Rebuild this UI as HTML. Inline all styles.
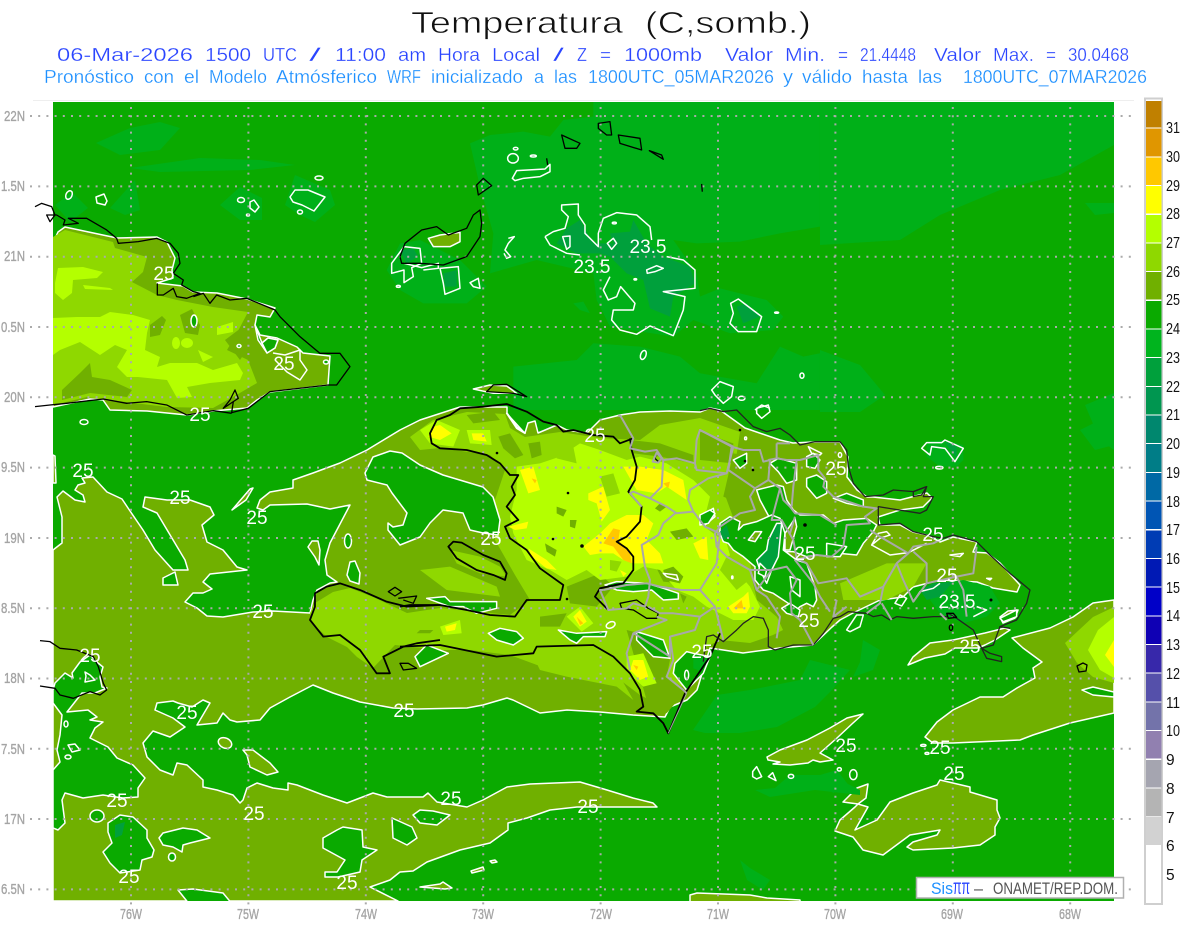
<!DOCTYPE html>
<html><head><meta charset="utf-8"><title>Temperatura</title>
<style>
html,body{margin:0;padding:0;background:#fff;width:1200px;height:927px;overflow:hidden}
svg{display:block;font-family:"Liberation Sans",sans-serif}
.o{fill:#70b000}.a{fill:#8fd800}.b{fill:#b4ff00}.y{fill:#ffff00}.r{fill:#ffc800}
.g{fill:#0aaa00}.l{fill:#00b018}.d{fill:#00a03c}
.w{stroke:#fff;stroke-width:1.5;stroke-linejoin:round;vector-effect:non-scaling-stroke}
.wl{fill:none;stroke:#fff;stroke-width:1.5;stroke-linejoin:round;vector-effect:non-scaling-stroke}
.k{fill:none;stroke:#000;stroke-width:1.3;stroke-linejoin:round;vector-effect:non-scaling-stroke}
.p{fill:none;stroke:#a8a8a8;stroke-width:2;stroke-linejoin:round;vector-effect:non-scaling-stroke}
.t1 text{fill:#111;stroke:#fff;stroke-width:.7}
.t2 text{fill:#2a45ff;font-size:18px;stroke:#fff;stroke-width:.25}
.t3 text{fill:#1e90ff;font-size:18px;stroke:#fff;stroke-width:.25}
.ax text{fill:#a4a4a4;font-size:15px;stroke:#a4a4a4;stroke-width:.35}
.lg text{fill:#111;font-size:15.5px}
.c text{fill:#fff;font-size:19px;text-anchor:middle}
</style></head><body>
<svg width="1200" height="927" viewBox="0 0 1200 927" xmlns="http://www.w3.org/2000/svg">
<defs><clipPath id="m"><rect x="53" y="102" width="1061" height="799"/></clipPath></defs>

<g class="t1" font-size="31">
<text x="411" y="33" textLength="212" lengthAdjust="spacingAndGlyphs">Temperatura</text>
<text x="645" y="33" textLength="166" lengthAdjust="spacingAndGlyphs">(C,somb.)</text>
</g>
<g class="t2">
<text x="57" y="61" textLength="136" lengthAdjust="spacingAndGlyphs">06-Mar-2026</text>
<text x="205" y="61" textLength="46" lengthAdjust="spacingAndGlyphs">1500</text>
<text x="263" y="61" textLength="34" lengthAdjust="spacingAndGlyphs">UTC</text>
<text x="309" y="61" textLength="12" lengthAdjust="spacingAndGlyphs">/</text>
<text x="335" y="61" textLength="51" lengthAdjust="spacingAndGlyphs">11:00</text>
<text x="398" y="61" textLength="28" lengthAdjust="spacingAndGlyphs">am</text>
<text x="438" y="61" textLength="42" lengthAdjust="spacingAndGlyphs">Hora</text>
<text x="492" y="61" textLength="48" lengthAdjust="spacingAndGlyphs">Local</text>
<text x="553" y="61" textLength="11" lengthAdjust="spacingAndGlyphs">/</text>
<text x="577" y="61" textLength="10" lengthAdjust="spacingAndGlyphs">Z</text>
<text x="600" y="61" textLength="11" lengthAdjust="spacingAndGlyphs">=</text>
<text x="624" y="61" textLength="78" lengthAdjust="spacingAndGlyphs">1000mb</text>
<text x="725" y="61" textLength="48" lengthAdjust="spacingAndGlyphs">Valor</text>
<text x="785" y="61" textLength="40" lengthAdjust="spacingAndGlyphs">Min.</text>
<text x="838" y="61" textLength="10" lengthAdjust="spacingAndGlyphs">=</text>
<text x="860" y="61" textLength="56" lengthAdjust="spacingAndGlyphs">21.4448</text>
<text x="934" y="61" textLength="47" lengthAdjust="spacingAndGlyphs">Valor</text>
<text x="993" y="61" textLength="41" lengthAdjust="spacingAndGlyphs">Max.</text>
<text x="1046" y="61" textLength="10" lengthAdjust="spacingAndGlyphs">=</text>
<text x="1068" y="61" textLength="61" lengthAdjust="spacingAndGlyphs">30.0468</text>
</g>
<g class="t3">
<text x="44" y="83" textLength="90" lengthAdjust="spacingAndGlyphs">Pronóstico</text>
<text x="144" y="83" textLength="30" lengthAdjust="spacingAndGlyphs">con</text>
<text x="184" y="83" textLength="15" lengthAdjust="spacingAndGlyphs">el</text>
<text x="209" y="83" textLength="58" lengthAdjust="spacingAndGlyphs">Modelo</text>
<text x="276" y="83" textLength="101" lengthAdjust="spacingAndGlyphs">Atmósferico</text>
<text x="387" y="83" textLength="34" lengthAdjust="spacingAndGlyphs">WRF</text>
<text x="431" y="83" textLength="92" lengthAdjust="spacingAndGlyphs">inicializado</text>
<text x="534" y="83" textLength="10" lengthAdjust="spacingAndGlyphs">a</text>
<text x="554" y="83" textLength="23" lengthAdjust="spacingAndGlyphs">las</text>
<text x="588" y="83" textLength="186" lengthAdjust="spacingAndGlyphs">1800UTC_05MAR2026</text>
<text x="783" y="83" textLength="10" lengthAdjust="spacingAndGlyphs">y</text>
<text x="802" y="83" textLength="50" lengthAdjust="spacingAndGlyphs">válido</text>
<text x="862" y="83" textLength="46" lengthAdjust="spacingAndGlyphs">hasta</text>
<text x="918" y="83" textLength="24" lengthAdjust="spacingAndGlyphs">las</text>
<text x="963" y="83" textLength="184" lengthAdjust="spacingAndGlyphs">1800UTC_07MAR2026</text>
</g>

<line x1="33" y1="100.5" x2="1134" y2="100.5" stroke="#eee"/>

<g clip-path="url(#m)">
<rect x="53" y="102" width="1061" height="799" class="g"/>

<!-- level 23 patches -->
<g class="l">
<g transform="translate(380,100) scale(.3333)">
<polygon points="270,130 330,105 430,95 510,110 550,60 640,50 640,5 1320,5 1320,380 1200,400 1080,425 950,430 880,420 950,520 960,590 1020,565 1160,600 1210,650 1180,690 1050,700 940,660 880,710 690,680 650,600 640,520 470,480 400,500 330,520 340,400 300,260"/>
<polygon points="60,430 120,420 240,480 320,560 260,610 130,610 60,570 20,510"/>
<polygon points="400,800 590,780 640,730 780,740 900,770 960,820 1130,850 1200,740 1270,770 1320,760 1320,930 400,930"/>
<polygon points="580,610 610,605 630,640 600,630"/>
</g>
<polygon points="820,102 1114,102 1114,145 1060,175 1000,190 940,215 900,240 820,245"/>
<polygon points="820,350 860,365 885,395 860,412 820,412"/>
<polygon points="1085,405 1114,393 1114,450 1100,440"/>
<polygon points="1085,203 1114,203 1114,213 1095,215"/>
<polygon points="693,730 717,695 750,690 800,680 810,660 850,670 832,690 815,707 777,727 740,733 705,733"/>
<polygon points="863,640 880,650 873,670 853,677 860,662"/>
<polygon points="740,860 750,868 770,880 763,890 747,880"/>
<polygon points="820,775 837,770 850,787 833,793"/>
<polygon points="96,143 130,128 160,122 180,128 160,150 120,155"/>
<polygon points="130,168 200,158 260,160 295,165 250,170 160,172"/>
<polygon points="55,205 72,192 88,208 70,222"/>
<polygon points="110,208 135,180 140,210 125,215"/>
<polygon points="220,205 240,187 262,198 262,220 240,220"/>
<polygon points="285,205 295,175 330,190 335,205 315,222 300,215"/>
<polygon points="1080,430 1110,415 1114,445 1095,450"/>
</g>
<g class="d" transform="translate(380,100) scale(.3333)">
<polygon points="560,385 600,360 640,430 700,430 690,400 750,395 760,360 800,430 850,470 930,500 945,550 880,590 870,650 810,625 790,540 740,520 690,470 660,460 590,460 530,430"/>
<polygon points="60,450 100,445 115,470 80,490"/>
<polygon points="190,520 230,510 230,560 195,560"/>
<polygon points="1070,620 1100,610 1140,650 1090,670"/>
</g>

<!-- main olive region -->
<polygon class="o w" points="53,901 53,550 62,543 62,517 57,497 63,491 75,500 85,502 83,495 75,490 78,485 85,483 82,478 93,477 107,492 122,499 128,508 143,530 155,550 173,570 188,570 185,560 157,513 143,507 145,497 167,500 190,500 210,507 214,515 202,525 207,542 223,550 237,567 247,570 210,574 203,582 212,589 203,593 193,593 185,602 197,608 207,616 223,617 253,612 273,611 310,613 313,600 317,590 330,583 337,582 327,575 325,560 330,543 350,505 330,509 307,504 270,505 263,510 257,508 260,500 270,492 293,488 293,480 313,473 340,463 367,450 400,430 420,420 460,407 507,407 507,413 517,427 525,433 528,423 535,421 538,433 557,425 567,430 587,433 600,420 620,415 640,412 670,411 700,412 710,408 720,410 745,428 780,440 793,443 813,442 840,442 848,457 847,477 857,490 867,497 873,497 900,500 927,493 932,498 923,507 900,510 878,517 880,525 900,525 913,532 927,535 940,542 953,537 977,542 973,552 987,553 1000,563 1020,585 1017,592 993,588 977,582 940,580 913,587 903,597 880,600 853,613 840,620 832,627 813,645 780,648 743,653 710,648 697,690 687,700 670,707 665,717 633,715 600,712 567,710 540,713 513,700 507,698 483,705 467,708 417,709 393,708 360,702 333,693 313,685 290,697 270,708 260,720 237,722 230,720 223,713 217,723 197,725 210,703 203,700 192,707 178,703 173,701 157,703 155,710 173,718 185,727 170,737 153,731 143,743 147,757 160,770 173,775 177,763 187,765 203,780 203,787 217,790 233,795 240,803 243,800 247,788 257,783 273,788 288,790 288,783 297,785 323,795 347,803 373,793 387,797 423,797 428,793 437,802 467,807 483,800 507,787 530,784 580,782 607,790 633,798 653,803 657,807 603,807 577,807 550,810 527,818 508,823 508,830 490,843 460,850 427,862 413,871 400,872 390,880 370,887 398,901"/>

<!-- olive pieces in sea -->
<polygon class="o w" points="53,455 55,456 56,483 53,483"/>
<polygon class="o w" points="1114,600 1093,603 1073,617 1050,628 1012,638 1023,648 1042,662 1033,668 1035,678 1017,688 1003,697 980,697 953,710 937,722 925,737 933,743 953,743 1020,740 1033,735 1070,723 1114,713"/>
<polygon class="a" points="1114,607 1093,617 1065,643 1077,663 1093,677 1114,683"/>
<polygon class="b" points="1114,617 1098,630 1088,650 1100,670 1114,678"/>
<polygon class="y" points="1114,640 1105,655 1114,667"/>
<polygon class="o w" points="908,665 913,657 930,643 953,640 985,633 1005,628 1010,630 995,640 985,645 978,648 955,648 945,654 925,658"/>
<polygon class="o w" points="1000,617 1008,611 1018,610 1015,618 1003,623"/>
<polygon class="o w" points="767,757 780,750 807,740 830,728 847,718 863,714 853,723 837,738 820,753 833,760 820,762 813,760 808,763 790,765 773,764 780,762 768,760"/>
<polygon class="o w" points="940,780 970,787 970,792 997,800 997,810 1000,818 995,827 995,835 980,845 953,848 913,850 907,847 913,842 937,835 940,830 910,835 883,855 863,850 853,837 835,831 840,820 855,807 858,804 843,802 857,788 868,784 866,798 858,804 868,807 855,830 877,820 890,802 913,793 937,785"/>
<polygon class="o w" points="690,905 690,895 697,893 750,895 767,898 800,900 800,905"/>
<polygon class="o w" points="232,510 250,489 253,488 246,500"/>
<polygon class="o w" points="308,547 312,541 318,541 320,550 319,565 315,557"/>
<polygon class="o w" points="420,887 440,884 443,882 452,888 445,889"/>
<polygon class="o w" points="471,871 483,867 484,870 472,873"/>
<polygon class="o w" points="490,861 495,860 497,862 492,863"/>
<ellipse class="o w" cx="225" cy="743" rx="7" ry="5" transform="rotate(25 225 743)"/>
<polygon class="o w" points="243,750 253,750 270,763 278,772 267,775 250,767 247,755"/>

<!-- Cuba -->
<polygon class="o w" points="53,243 58,232 65,227 117,238 157,237 167,242 175,258 172,270 173,278 157,283 183,286 193,292 217,293 247,299 275,308 270,317 257,315 255,325 260,335 277,338 297,347 303,353 330,356 328,385 270,392 257,400 247,408 213,411 187,415 147,411 110,410 103,400 90,399 53,407"/>
<polygon class="a" points="53,237 65,230 113,242 115,248 147,257 143,272 132,282 157,295 177,300 213,307 248,312 237,333 227,350 248,360 257,383 233,397 213,408 167,407 110,400 87,397 53,405"/>
<g class="o">
<polygon points="62,390 80,373 90,363 92,377 110,380 132,390 127,397 90,393 62,400"/>
<polygon points="180,315 192,309 200,325 198,335 185,333"/>
<polygon points="150,325 162,316 166,320 160,335 150,337"/>
<polygon points="225,340 245,325 250,345 240,360"/>
</g>
<g class="b">
<polygon points="58,268 83,267 103,272 97,278 73,280 72,293 63,300 55,293 55,283"/>
<polygon points="83,285 110,288 113,290 85,289"/>
<polygon points="53,318 77,317 100,317 110,312 133,315 150,320 147,333 145,350 160,357 157,367 170,363 197,363 213,370 237,363 243,373 240,380 210,383 187,387 192,397 177,398 167,380 138,377 127,377 117,367 127,350 115,345 100,355 80,342 60,350 53,355"/>
<polygon points="217,327 233,322 233,332 217,335"/>
<polygon points="198,350 213,357 203,362"/>
<ellipse cx="187" cy="343" rx="6" ry="5"/>
<ellipse cx="176" cy="343" rx="4" ry="6"/>
</g>
<g class="g">
<polygon class="w" points="255,325 262,343 268,338 278,340 275,348 267,353 258,340"/>
<polygon class="w" points="262,343 268,338 278,340 275,348 267,353"/>
<ellipse class="w" cx="194" cy="321" rx="3" ry="6"/>
<ellipse class="w" cx="239" cy="346" rx="2" ry="1.5"/>
<ellipse class="w" cx="326" cy="362" rx="2.5" ry="2"/>
<ellipse class="w" cx="84" cy="422" rx="4" ry="2.5"/>
</g>
<polyline class="wl" points="273,353 285,355 300,350 300,360 307,370 300,380 287,372 275,360"/>

<!-- Hispaniola gradient -->
<polygon class="a" points="410,437 433,420 467,412 505,414 510,428 525,437 560,432 600,438 640,440 660,425 700,418 740,432 735,465 725,495 733,517 750,570 757,600 777,617 783,630 773,635 750,643 720,640 700,650 692,670 680,690 665,700 650,700 640,695 620,680 600,668 570,665 537,665 510,655 470,650 440,650 395,645 373,668 357,657 347,647 327,637 312,623 310,613 315,603 333,592 350,588 373,597 407,613 440,608 480,612 510,615 530,600 515,575 495,540 495,500 505,470 490,455 440,448 420,450"/>
<g transform="translate(700,400) scale(.3333)" class="a">
<polygon points="420,550 560,490 680,490 640,560 560,600 430,600"/>
</g>
<g transform="translate(400,400) scale(.3333)">
<g class="a">
<polygon points="150,450 240,470 300,500 320,530 240,520 170,490"/>
<polygon points="60,510 150,500 290,560 300,590 140,570"/>
<polygon points="410,790 600,780 660,830 700,900 650,860 500,830 420,810"/>
</g>
<g class="o">
<polygon points="295,110 330,100 370,165 345,175 310,145"/>
<polygon points="385,130 420,125 425,165 395,175"/>
<polygon points="200,45 280,35 300,60 220,70"/>
<polygon points="470,320 500,330 490,350 470,340"/>
<polygon points="510,360 530,360 525,385 510,380"/>
<polygon points="435,430 470,450 465,470 440,455"/>
<polygon points="480,485 500,485 495,500"/>
<polygon points="620,490 645,490 640,510 625,510"/>
<polygon points="765,325 780,310 800,320 780,335"/>
<polygon points="810,395 860,385 880,410 830,420"/>
<polygon points="770,505 820,500 850,530 840,550 790,545"/>
<polygon points="980,480 1040,470 1060,520 1020,560 980,530"/>
<polygon points="840,580 860,590 850,610"/>
<polygon points="900,95 1000,130 1000,190 900,180"/>
<polygon points="690,120 780,130 880,165 880,190 780,170 700,160"/>
<polygon points="1000,160 1130,180 1200,190 1200,380 1100,280 1060,280 1040,320 970,290"/>
<polygon points="680,690 720,700 810,780 800,830 860,870 800,940 740,900"/>
<polygon points="500,560 600,520 640,560 590,620 510,610"/>
<polygon points="60,690 100,690 90,700 50,700"/>
<polygon points="420,650 500,640 480,680 420,680"/>
</g>
<g class="b">
<polygon points="350,200 420,190 480,170 540,130 600,150 680,180 720,170 800,190 880,240 930,290 920,330 900,370 980,430 1000,500 1050,560 1080,620 1060,660 1000,660 920,620 880,590 830,570 780,510 730,500 680,530 600,540 560,510 500,540 450,510 380,480 340,400 330,350 350,270"/>
<polygon points="60,90 110,60 180,90 160,140 90,130"/>
<polygon points="200,90 270,90 275,135 210,130"/>
<polygon points="500,650 540,620 580,670 545,695"/>
<polygon points="120,680 180,660 185,700 130,705"/>
<polygon points="680,770 730,760 770,850 730,860 680,815"/>
<polygon points="130,770 400,650 450,660 300,700 200,700" opacity="0"/>
</g>
<g class="o">
<polygon points="470,320 500,330 490,350 470,340"/>
<polygon points="510,360 530,360 525,385 510,380"/>
<polygon points="435,430 470,450 465,470 440,455"/>
<polygon points="765,325 780,310 800,320 780,335"/>
<polygon points="810,395 860,385 880,410 830,420"/>
<polygon points="790,510 820,500 850,530 840,550 795,540"/>
</g>
<g class="a">
<polygon points="480,130 520,140 530,190 470,175"/>
<polygon points="630,480 665,485 650,515 630,510"/>
<polygon points="600,230 640,220 660,280 620,290"/>
<polygon points="980,470 1040,450 1060,530 1010,570 960,510"/>
</g>
<g class="y">
<polygon points="360,210 400,200 420,270 385,280"/>
<polygon points="565,280 610,260 630,330 605,365 590,310 565,300"/>
<polygon points="550,440 600,400 630,370 680,345 730,345 760,370 740,420 780,460 790,490 740,490 700,490 670,480 640,460 600,460 570,465"/>
<polygon points="670,200 720,200 790,210 850,240 860,300 800,260 770,280 710,270 690,235"/>
<polygon points="880,430 920,410 925,480 900,475"/>
<polygon points="985,620 1030,590 1045,575 1050,620 1040,640 1000,640"/>
<polygon points="385,445 440,480 470,510 440,505 395,470"/>
<polygon points="325,380 385,365 380,385 345,390"/>
<polygon points="100,80 120,75 155,100 120,120 85,110"/>
<polygon points="215,100 250,100 260,125 220,120"/>
<polygon points="520,650 540,630 560,665 540,680"/>
<polygon points="135,680 170,670 165,690 140,695"/>
<polygon points="700,780 730,780 745,830 720,840 690,810"/>
<polygon points="660,510 680,520 670,530"/>
</g>
<g class="r">
<polygon points="610,430 640,385 660,390 655,420 690,460 695,490 670,480 640,440"/>
<polygon points="790,250 810,245 805,265"/>
<polygon points="395,235 410,240 405,250"/>
<polygon points="1000,625 1025,600 1030,625"/>
<polygon points="530,650 550,670 540,675"/>
<polygon points="700,795 715,800 710,810"/>
</g>

<!-- green holes west / south of DR -->
<g class="g">
<polygon class="w" points="900,350 940,325 945,350 915,375"/>
<polygon class="w" points="615,555 650,545 740,550 790,565 835,580 835,597 790,600 755,570 700,575 650,570"/>
<polygon class="w" points="265,700 300,685 350,695 370,715 340,735 290,720"/>
<polygon class="w" points="475,690 530,700 620,695 615,710 550,710 530,730 510,720"/>
<polygon class="w" points="80,595 135,590 150,605 290,605 290,625 230,640 190,620 150,620"/>
<polygon class="w" points="45,770 80,735 145,760 60,800"/>
<polygon class="w" points="710,695 790,720 810,775 760,770 710,720"/>
<polygon class="w" points="825,790 860,755 880,760 930,770 910,820 860,870 820,820"/>
<polygon class="w" points="1000,180 1040,160 1040,190 1020,205"/>
</g>
<g class="l"><polygon points="880,770 925,775 905,815 880,805"/></g>
<g class="wl">
<polygon class="wl" points="790,520 830,525 835,540 800,530"/>
<ellipse class="wl" cx="632" cy="675" rx="14" ry="9" transform="rotate(-25 632 675)"/>
<ellipse class="wl" cx="1037" cy="115" rx="3" ry="4"/>
<ellipse class="wl" cx="997" cy="532" rx="2" ry="4"/>
<ellipse class="wl" cx="860" cy="825" rx="6" ry="14"/>
<polygon class="wl" points="320,40 350,85 375,100"/>
</g>
</g>

<!-- green holes in olive -->
<polygon class="g w" points="365,473 373,457 390,451 402,453 420,465 443,475 483,487 493,497 500,520 498,535 483,533 470,530 463,513 443,510 430,523 420,537 400,545 388,530 388,523 393,527 403,525 407,513 392,493 387,485 367,480"/>
<polygon class="g w" points="53,828 53,770 60,762 57,750 60,735 62,715 53,703 53,690 55,683 65,673 73,678 72,673 80,662 90,655 98,663 103,667 100,677 102,687 107,688 95,693 82,693 67,712 88,710 97,717 90,720 103,722 95,728 90,738 108,747 117,758 133,765 145,778 138,788 138,797 123,798 103,795 83,798 65,793 62,800 65,823 58,830"/>
<polygon class="g w" points="108,823 120,815 133,817 147,830 147,838 154,850 152,857 142,860 140,870 120,873 110,863 103,852 112,843 108,832"/>
<polygon class="g w" points="159,838 163,833 183,828 197,830 210,838 190,843 183,845 182,852 173,847 163,845"/>
<ellipse class="g w" cx="97" cy="816" rx="7" ry="6"/>
<ellipse class="g w" cx="172" cy="857" rx="3.5" ry="4"/>
<polygon class="g w" points="323,838 337,830 343,827 362,830 363,847 377,850 362,860 360,872 338,877 325,877 325,872 337,872 345,860 323,848"/>
<polygon class="g w" points="392,818 412,827 417,838 407,845 393,838"/>
<polygon class="g w" points="413,815 420,810 433,811 450,815 437,825 420,823"/>
<polygon class="g w" points="178,890 193,889 223,893 233,905 190,905"/>
<polygon class="g w" points="1082,690 1093,687 1114,692 1114,697 1093,695"/>
<ellipse class="g w" cx="348" cy="541" rx="3.5" ry="7"/>
<polygon class="g w" points="350,562 355,561 360,573 359,584 350,581 347,575"/>
<polygon class="g w" points="163,578 175,572 178,585 163,585"/>
<g class="wl">
<ellipse class="wl" cx="66" cy="724" rx="2" ry="3"/>
<ellipse class="wl" cx="68" cy="757" rx="3" ry="2"/>
<polygon class="wl" points="68,745 75,744 80,750 72,752"/>
<polygon class="wl" points="85,672 90,675 95,680 85,682 86,676"/>
</g>
<g fill="#00a03c"><polygon points="115,825 125,822 122,835 115,838"/></g>

<!-- DR central greens -->
<g transform="translate(700,400) scale(.3333)">
<polygon class="g w" points="170,270 230,255 250,260 260,300 280,330 300,345 370,345 400,370 430,360 500,355 530,375 520,395 490,430 470,465 420,460 390,470 350,465 320,470 280,455 255,455 250,400 230,365 215,365 180,300"/>
<polygon class="g w" points="60,370 90,350 120,365 115,390 130,375 170,365 215,345 240,355 255,400 250,450 290,480 320,490 345,560 350,600 340,620 320,610 300,620 280,640 265,610 250,600 220,580 190,570 165,540 165,500 130,470 100,450 85,430 70,425 60,400"/>
<polygon class="g w" points="210,190 235,175 290,190 290,240 260,250 235,215"/>
<polygon class="g w" points="320,235 350,225 380,245 380,280 350,295 320,260"/>
<polygon class="g w" points="320,170 340,160 360,180 345,205 320,200"/>
<polygon class="g w" points="400,295 440,280 490,300 490,320 440,310"/>
<polygon class="g w" points="440,690 470,645 490,645 480,680 450,695"/>
<polygon class="g w" points="245,625 270,610 300,630 295,650 260,640"/>
<polygon class="g w" points="0,345 30,330 45,340 25,370 0,375"/>
<polygon class="g w" points="380,430 440,440 420,470 380,470"/>
<polygon class="o w" points="255,400 285,355 290,380 270,450 255,450"/>
<polygon class="o w" points="145,420 165,395 185,395 165,425"/>
<polygon class="d" points="205,420 230,370 245,370 235,470 215,510 180,510 170,480 200,450"/>
<polygon class="d" points="60,395 80,375 90,410 70,420"/>
<polygon class="wl" points="205,420 230,370 245,370 235,470 215,510 200,550 180,510 170,480 200,450"/>
<polygon class="wl" points="270,530 300,540 300,590 275,570"/>
<polygon class="wl" points="515,435 535,400 560,395 570,405 540,415"/>
<polyline class="wl" points="515,435 570,465 625,458 680,430"/>
<polygon class="g w" points="180,490 200,510 195,530 175,520"/>
<polygon class="wl" points="325,140 365,160 360,165 335,160"/>
<ellipse class="wl" cx="420" cy="165" rx="5" ry="7"/>
<polygon class="wl" points="750,465 790,460 780,470"/>
<polygon class="wl" points="860,535 875,535 870,540"/>
<!-- SE green -->
<polygon class="l" points="720,550 790,540 870,560 900,610 860,650 790,670 720,640 690,600"/>
<polygon class="d" points="660,570 700,550 760,545 720,590 680,600"/>
<polyline class="wl" points="640,605 660,575 700,565 720,550"/>
<polyline class="wl" points="830,620 860,630 820,650"/>
<polygon class="wl" points="585,610 600,585 620,595 605,618"/>
<polygon class="g w" points="900,655 950,630 950,650 910,665"/>
<!-- small NE green outline -->
<polygon class="l" points="680,125 730,120 790,135 790,180 770,200 720,200 680,170"/>
<polygon class="d" points="735,125 770,140 770,175"/>
<polygon class="wl" points="665,145 680,128 725,128 735,120 790,145 765,185 735,145 695,140 690,165"/>
<ellipse class="wl" cx="718" cy="203" rx="11" ry="4"/>
<polygon class="wl" points="170,25 205,15 210,35 185,55 170,40"/>
</g>
<polygon class="l" points="755,790 775,788 790,775 830,775 860,790 860,795 815,790 770,797"/>
<g class="wl" transform="translate(740,580) scale(.3333)">
<polygon class="wl" points="38,575 50,560 65,590 50,597 38,590"/>
<polygon class="wl" points="85,590 98,578 108,602"/>
<ellipse class="wl" cx="153" cy="589" rx="8" ry="6"/>
<ellipse class="wl" cx="298" cy="568" rx="6" ry="5"/>
<ellipse class="wl" cx="340" cy="584" rx="11" ry="15"/>
<ellipse class="wl" cx="550" cy="496" rx="8" ry="3"/>
<ellipse class="wl" cx="561" cy="520" rx="6" ry="3"/>
</g>

<!-- Bahamas white contours -->
<g class="wl" transform="translate(380,100) scale(.3333)">
<ellipse class="wl" cx="399" cy="175" rx="16" ry="14"/>
<ellipse class="wl" cx="407" cy="146" rx="7" ry="4"/>
<ellipse class="wl" cx="460" cy="168" rx="9" ry="3"/>
<polygon class="wl" points="397,235 410,212 495,207 510,193 510,215 480,230 430,235 405,242"/>
<polygon class="wl" points="35,490 72,440 120,445 125,490 95,503 100,530 72,548 72,510 35,520"/>
<polyline class="wl" points="72,490 125,503 175,490 175,505 130,510"/>
<polygon class="wl" points="180,505 235,500 240,565 195,583 190,550"/>
<polygon class="wl" points="270,548 295,535 300,565 280,560"/>
<ellipse class="wl" cx="55" cy="559" rx="6" ry="3"/>
<polyline class="wl" points="385,415 403,410 385,430 375,450 392,470 380,475 372,460"/>
<polyline class="wl" points="495,410 520,395 555,385 565,350 545,330 545,315 595,312 595,345 615,375 615,400 655,440 655,400 670,355 710,338 770,345 810,380 815,420"/>
<polyline class="wl" points="495,410 510,435 560,460 600,465"/>
<polyline class="wl" points="690,530 670,570 685,600 710,590 722,560 765,610 760,630 700,630 695,660 720,690 770,703 810,678 880,707 910,630 915,590 850,575 945,565 945,510 910,480 860,470"/>
<polygon class="wl" points="548,410 570,408 570,440 560,448"/>
<polygon class="wl" points="682,430 700,415 710,430 695,448"/>
<ellipse class="wl" cx="703" cy="369" rx="6" ry="2.5"/>
<polygon class="wl" points="800,510 830,497 850,505 825,515 802,520"/>
<ellipse class="wl" cx="766" cy="538" rx="4" ry="2"/>
<polygon class="wl" points="1052,610 1075,597 1145,650 1130,695 1075,695 1050,670 1060,640"/>
<ellipse class="wl" cx="1190" cy="638" rx="6" ry="2"/>
<ellipse class="wl" cx="790" cy="765" rx="8" ry="14" transform="rotate(20 790 765)"/>
<ellipse class="wl" cx="1266" cy="827" rx="6" ry="8"/>
<polygon class="wl" points="995,870 1020,845 1060,860 1055,890 1030,910 1005,885"/>
<ellipse class="wl" cx="1085" cy="895" rx="10" ry="6"/>
<polyline class="wl" points="1125,930 1145,915 1170,925"/>
<polygon class="o w" points="280,867 330,855 380,858 410,880 340,880"/>
<polygon class="o w" points="145,415 180,405 240,397 240,425 210,440 160,440"/>
</g>
<g class="wl">
<ellipse class="wl" cx="69" cy="195" rx="3" ry="4.5" transform="rotate(25 69 195)"/>
<polygon class="wl" points="96,197 104,194 107,201 105,205 97,203"/>
<ellipse class="wl" cx="241" cy="200" rx="3.5" ry="2.5"/>
<polygon class="wl" points="250,202 254,200 259,207 255,212 250,208"/>
<ellipse class="wl" cx="248" cy="215" rx="1.5" ry="1"/>
<ellipse class="wl" cx="319" cy="178" rx="4" ry="2"/>
<polygon class="wl" points="290,197 295,190 308,190 325,197 314,211 302,205 293,202"/>
<ellipse class="wl" cx="300" cy="212" rx="2.5" ry="2"/>
</g>
</g>

<!-- grid -->
<g stroke="#aaa" stroke-width="2" stroke-dasharray="2 6.2" fill="none">
<path d="M30 116H1133M30 186.4H1133M30 256.7H1133M30 327H1133M30 397.3H1133M30 467.6H1133M30 538H1133M30 608.2H1133M30 678.5H1133M30 748.8H1133M30 819H1133M30 889.4H1133"/>
<path d="M131 107V905M248.4 107V905M365.8 107V905M483.2 107V905M600.6 107V905M718 107V905M835.4 107V905M952.8 107V905M1070.2 107V905"/>
</g>

<!-- Coastlines -->
<g>
<g transform="translate(400,400) scale(.3333)">
<polyline class="k" style="stroke-width:1.8" points="700,115 660,130 640,110 580,105 520,90 490,95 470,75 430,65 380,35 320,12 250,20 180,25 150,45 110,60 90,100 95,130 120,145 200,150 260,165 300,190 330,225 355,225 335,260 345,285 320,320 355,360 315,380 330,415 380,450 420,505 490,555 480,600 380,600 345,650 270,645 200,630 120,615 30,615 0,620"/>
<polyline class="k" style="stroke-width:1.8" points="0,740 120,735 290,770 400,760 410,740 580,735 640,770 690,820 720,870 730,920 710,935 760,940 790,970 805,1000 855,880 930,770 960,700"/>
<polygon class="k" style="stroke-width:1.8" points="145,440 160,425 185,428 250,465 300,485 320,520 315,540 280,525 230,510 170,475"/>
<polyline class="k" style="stroke-width:1.8" points="690,115 695,150 710,200 705,240 685,275 725,320 720,365 680,410 650,425 680,445 700,470 700,510 670,550 600,565 585,590 625,630"/>
<polygon class="k" points="660,610 710,600 745,625 775,640 770,655 740,655 700,630 665,625"/>
<polygon class="k" points="770,160 785,175 775,185 765,175"/>
</g>
<g transform="translate(40,450) scale(.3333)">
<polyline class="k" style="stroke-width:1.8" points="1200,465 1100,470 1040,455 960,420 900,400 860,410 825,430 825,470 810,510 850,560 900,555 960,600 1010,670 1050,670 1030,620 1090,590 1130,580 1200,570"/>
<polygon class="k" points="1045,425 1065,412 1085,425 1065,438"/>
<polygon class="k" points="1080,640 1105,640 1130,655 1090,660"/>
<polyline class="k" points="1075,445 1130,438 1120,460 1090,450"/>
<polyline class="k" points="0,572 30,575 60,595 110,600 160,620 175,650 190,700 200,720 180,735 150,725 100,745 60,735 45,715 0,708"/>
</g>
<polygon class="k" transform="translate(1077,665)" points="0,1 6,-2 10,0 9,6 2,7"/>
<g transform="translate(700,400) scale(.3333)">
<polyline class="k" style="stroke:#222" points="0,32 30,25 70,35 110,30 130,50 160,80 200,95 240,85 270,105 300,135 345,125 420,125 440,150 445,200 460,250 495,290 550,285 580,270 640,275 680,260 670,290 700,290 680,330 660,340 535,320 535,375 600,370 640,395 700,410 730,415 760,405 830,425 870,465 930,520 990,570 980,610 950,660 900,680 880,735 845,745 820,690 770,655 745,640 740,650 700,650 640,655 590,650 570,660 545,645 520,650 500,640 445,635 420,650 400,655 370,700 340,735 280,735 225,750 205,740 205,690 190,655 160,650 130,670 110,690 70,725 40,705 20,710 15,745 10,785"/>
<polyline class="k" style="stroke:#222" points="845,745 860,775 905,785 905,770 870,760 845,745"/>
<polyline class="k" style="stroke:#222" points="900,680 930,685"/>
<polygon class="k" style="stroke:#222" points="640,275 680,260 665,285 640,290"/>
</g>
<g transform="translate(740,580) scale(.3333)">
<polygon class="k" points="620,100 640,100 650,112 625,115"/>
<ellipse class="k" cx="633" cy="143" rx="5" ry="8"/>
</g>
<g transform="translate(0,200) scale(.3333)">
<polyline class="k" points="105,20 125,10 155,20 165,45 150,65 140,45 170,45 195,60 190,75 235,70 205,55 260,55 320,90 350,115 355,130 415,125 470,115 510,130 535,160 540,190 520,220 550,240 545,255 580,275 600,280 560,295 530,290 520,265 490,285 472,285 472,250"/>
<polyline class="k" points="580,290 610,280 630,310 650,285 690,300 740,295 825,330 840,350 900,410 960,460 1020,460 1050,500 1010,555 985,555 810,575 745,625 695,638 700,605 715,595 705,570 690,600 670,625 700,605"/>
<polyline class="k" points="695,640 640,632 560,645 500,615 440,605 380,610 310,597 200,610 150,615 105,620"/>
</g>
<g transform="translate(380,100) scale(.3333)">
<polygon class="k" points="60,470 75,430 125,390 170,380 205,405 260,385 280,345 300,330 305,370 300,410 260,470 190,495 120,490 65,490"/>
<polygon class="k" points="290,255 310,235 335,257 295,285"/>
<polygon class="k" points="545,105 600,130 590,145 555,145"/>
<polygon class="k" points="655,70 690,65 695,105 680,105 655,85"/>
<polygon class="k" points="715,105 780,115 785,150 720,130"/>
<polygon class="k" points="808,152 845,165 850,178"/>
<polyline class="k" points="500,175 503,195"/>
<polyline class="k" points="965,252 967,275"/>
<polygon class="k" points="320,875 340,855 380,853 440,890 400,880"/>
</g>
<g fill="#000">
<circle cx="497" cy="453" r="1.3"/><circle cx="568" cy="493" r="1.3"/><circle cx="582" cy="546" r="1.8"/><circle cx="553" cy="539" r="1.3"/><circle cx="567" cy="599" r="1.3"/><circle cx="740" cy="430" r="1.3"/><circle cx="745" cy="461" r="1.3"/><circle cx="753" cy="470" r="1.3"/><circle cx="805" cy="525" r="1.8"/><circle cx="991" cy="600" r="1.5"/>
</g>
</g>

<!-- Provincial lines -->
<g transform="translate(400,400) scale(.3333)">
<polyline class="p" points="660,45 680,80 700,115 690,145 735,155 770,150 790,180 830,175 885,190 890,120 900,90 940,110 1000,140"/>
<polyline class="p" points="790,180 785,260 750,295 700,275 690,280 725,320"/>
<polyline class="p" points="885,190 890,210 980,220 1000,140"/>
<polyline class="p" points="980,220 925,235 870,270 865,300 880,335 825,340 790,370 775,405 725,435 735,500 750,540 745,590 735,620"/>
<polyline class="p" points="750,295 800,320 830,340"/>
<polyline class="p" points="880,335 915,380 960,400 950,490 900,570 845,570 780,560 740,550 680,555 610,570"/>
<polyline class="p" points="900,570 945,620 900,650 820,640 780,640 745,620"/>
<polyline class="p" points="945,620 960,680 970,720"/>
<polyline class="p" points="900,650 885,690 810,710 820,780 800,830 850,870 860,880"/>
<polyline class="p" points="700,700 710,705 810,770 810,710"/>
<polyline class="p" points="770,650 800,660 700,700 680,760 690,810"/>
<polyline class="p" points="860,880 805,1000" style="stroke-width:1"/>
<polygon class="p" points="770,158 785,175 775,188 758,185"/>
<polyline class="p" points="610,570 600,570 625,630 680,625 700,610 735,620"/>
<polyline class="p" points="660,45 655,50"/>
</g>
<g transform="translate(700,400) scale(.3333)">
<polyline class="p" points="0,90 95,140 85,210 165,265 150,290 165,330 120,340 60,380 45,400 50,440 80,470 150,510 170,570 200,590 240,650 230,715"/>
<polyline class="p" points="95,140 130,150 180,150 190,185 210,180 205,240 165,265"/>
<polyline class="p" points="230,130 230,175 205,180"/>
<polyline class="p" points="230,130 270,130"/>
<polyline class="p" points="230,175 260,180 300,180 355,165 355,210 375,235 370,260 400,290 490,320 530,325 495,350 510,370 440,375 430,440 395,470 350,465 285,480 340,550 360,590 390,635"/>
<polyline class="p" points="205,240 240,265 250,300 270,320 285,340 360,345 410,375"/>
<polyline class="p" points="290,180 280,260 275,320"/>
<polyline class="p" points="285,350 270,400"/>
<polyline class="p" points="240,265 215,360 245,360 280,420 290,475 320,490 355,550 440,535 480,590 550,560 590,490 625,460 540,410 510,390"/>
<polyline class="p" points="625,460 640,440 700,430 720,420"/>
<polyline class="p" points="590,490 610,540 640,605 680,550 680,490 640,455"/>
<polyline class="p" points="680,550 770,530 790,570 800,650"/>
<polyline class="p" points="770,530 820,520 830,440"/>
<polyline class="p" points="545,610 575,660"/>
<polyline class="p" points="550,560 540,610 500,640"/>
<polyline class="p" points="150,510 215,510 260,500 290,540 270,580 275,640 300,660 340,735"/>
<polyline class="p" points="215,510 170,570"/>
<polyline class="p" points="410,600 400,650 440,620"/>
<polyline class="p" points="720,640 740,660"/>
</g>

<!-- Contour labels -->
<g class="c" clip-path="url(#m)">
<text x="164" y="280">25</text><text x="284" y="370">25</text><text x="200" y="421">25</text><text x="595" y="442">25</text>
<text x="83" y="477">25</text><text x="180" y="504">25</text><text x="257" y="524">25</text><text x="491" y="545">25</text>
<text x="836" y="475">25</text><text x="933" y="541">25</text><text x="805" y="560">25</text><text x="947" y="582">25</text>
<text x="263" y="618">25</text><text x="809" y="627">25</text><text x="970" y="653">25</text><text x="702" y="658">25</text>
<text x="90" y="662">25</text><text x="187" y="719">25</text><text x="404" y="717">25</text><text x="846" y="752">25</text>
<text x="940" y="754">25</text><text x="954" y="780">25</text><text x="117" y="807">25</text><text x="451" y="805">25</text>
<text x="588" y="813">25</text><text x="254" y="820">25</text><text x="129" y="883">25</text><text x="347" y="889">25</text>
<text x="648" y="253">23.5</text><text x="592" y="273">23.5</text><text x="957" y="608">23.5</text>
</g>

<!-- Axis -->
<g class="ax">
<text x="4" y="121" textLength="21" lengthAdjust="spacingAndGlyphs">22N</text>
<text x="1" y="191" textLength="24" lengthAdjust="spacingAndGlyphs">1.5N</text>
<text x="4" y="261" textLength="21" lengthAdjust="spacingAndGlyphs">21N</text>
<text x="1" y="332" textLength="24" lengthAdjust="spacingAndGlyphs">0.5N</text>
<text x="4" y="402" textLength="21" lengthAdjust="spacingAndGlyphs">20N</text>
<text x="1" y="472" textLength="24" lengthAdjust="spacingAndGlyphs">9.5N</text>
<text x="4" y="543" textLength="21" lengthAdjust="spacingAndGlyphs">19N</text>
<text x="1" y="613" textLength="24" lengthAdjust="spacingAndGlyphs">8.5N</text>
<text x="4" y="683" textLength="21" lengthAdjust="spacingAndGlyphs">18N</text>
<text x="1" y="754" textLength="24" lengthAdjust="spacingAndGlyphs">7.5N</text>
<text x="4" y="824" textLength="21" lengthAdjust="spacingAndGlyphs">17N</text>
<text x="1" y="894" textLength="24" lengthAdjust="spacingAndGlyphs">6.5N</text>
<text x="120" y="919" textLength="22" lengthAdjust="spacingAndGlyphs">76W</text>
<text x="237" y="919" textLength="22" lengthAdjust="spacingAndGlyphs">75W</text>
<text x="355" y="919" textLength="22" lengthAdjust="spacingAndGlyphs">74W</text>
<text x="472" y="919" textLength="22" lengthAdjust="spacingAndGlyphs">73W</text>
<text x="590" y="919" textLength="22" lengthAdjust="spacingAndGlyphs">72W</text>
<text x="707" y="919" textLength="22" lengthAdjust="spacingAndGlyphs">71W</text>
<text x="824" y="919" textLength="22" lengthAdjust="spacingAndGlyphs">70W</text>
<text x="941" y="919" textLength="22" lengthAdjust="spacingAndGlyphs">69W</text>
<text x="1059" y="919" textLength="22" lengthAdjust="spacingAndGlyphs">68W</text>
</g>

<!-- Footer box -->
<rect x="916.5" y="877.5" width="207" height="20.5" fill="#fff" stroke="#b0b0b0" stroke-width="1.5"/>
<g font-size="17">
<text x="931" y="894" fill="#1e90ff" textLength="22" lengthAdjust="spacingAndGlyphs">Sis</text>
<text x="953" y="894" fill="#2a45ff" font-size="21" textLength="17" lengthAdjust="spacingAndGlyphs">ππ</text>
<text x="974" y="894" fill="#555" textLength="9" lengthAdjust="spacingAndGlyphs">–</text>
<text x="993" y="894" fill="#555" textLength="125" lengthAdjust="spacingAndGlyphs">ONAMET/REP.DOM.</text>
</g>

<!-- Legend -->
<rect x="1145" y="98.5" width="17" height="805.5" fill="#fff" stroke="#cfcfcf" stroke-width="2"/>
<g shape-rendering="crispEdges">
<rect x="1146" y="101" width="15.5" height="26.5" fill="#c08000"/>
<rect x="1146" y="128.7" width="15.5" height="27.6" fill="#e09600"/>
<rect x="1146" y="157.4" width="15.5" height="27.6" fill="#ffc800"/>
<rect x="1146" y="186.1" width="15.5" height="27.6" fill="#ffff00"/>
<rect x="1146" y="214.8" width="15.5" height="27.6" fill="#b4ff00"/>
<rect x="1146" y="243.4" width="15.5" height="27.6" fill="#8fd800"/>
<rect x="1146" y="272.1" width="15.5" height="27.6" fill="#70b000"/>
<rect x="1146" y="300.8" width="15.5" height="27.6" fill="#0aaa00"/>
<rect x="1146" y="329.5" width="15.5" height="27.6" fill="#00b41e"/>
<rect x="1146" y="358.2" width="15.5" height="27.6" fill="#00a03c"/>
<rect x="1146" y="386.9" width="15.5" height="27.6" fill="#009650"/>
<rect x="1146" y="415.6" width="15.5" height="27.6" fill="#00876e"/>
<rect x="1146" y="444.2" width="15.5" height="27.6" fill="#007d87"/>
<rect x="1146" y="472.9" width="15.5" height="27.6" fill="#0069a5"/>
<rect x="1146" y="501.6" width="15.5" height="27.6" fill="#0055b4"/>
<rect x="1146" y="530.3" width="15.5" height="27.6" fill="#003cb4"/>
<rect x="1146" y="559" width="15.5" height="27.6" fill="#0019b4"/>
<rect x="1146" y="587.7" width="15.5" height="27.6" fill="#0000c8"/>
<rect x="1146" y="616.3" width="15.5" height="27.6" fill="#0f00b4"/>
<rect x="1146" y="645" width="15.5" height="27.6" fill="#3728aa"/>
<rect x="1146" y="673.7" width="15.5" height="27.6" fill="#5550aa"/>
<rect x="1146" y="702.4" width="15.5" height="27.6" fill="#7373aa"/>
<rect x="1146" y="731.1" width="15.5" height="27.6" fill="#9180b0"/>
<rect x="1146" y="759.8" width="15.5" height="27.6" fill="#a5a5b0"/>
<rect x="1146" y="788.5" width="15.5" height="27.6" fill="#b4b4b4"/>
<rect x="1146" y="816.5" width="15.5" height="28.4" fill="#d2d2d2"/>
</g>
<g class="lg">
<text x="1166" y="133" textLength="14" lengthAdjust="spacingAndGlyphs">31</text>
<text x="1166" y="162" textLength="14" lengthAdjust="spacingAndGlyphs">30</text>
<text x="1166" y="191" textLength="14" lengthAdjust="spacingAndGlyphs">29</text>
<text x="1166" y="219" textLength="14" lengthAdjust="spacingAndGlyphs">28</text>
<text x="1166" y="248" textLength="14" lengthAdjust="spacingAndGlyphs">27</text>
<text x="1166" y="277" textLength="14" lengthAdjust="spacingAndGlyphs">26</text>
<text x="1166" y="305" textLength="14" lengthAdjust="spacingAndGlyphs">25</text>
<text x="1166" y="334" textLength="14" lengthAdjust="spacingAndGlyphs">24</text>
<text x="1166" y="363" textLength="14" lengthAdjust="spacingAndGlyphs">23</text>
<text x="1166" y="392" textLength="14" lengthAdjust="spacingAndGlyphs">22</text>
<text x="1166" y="420" textLength="14" lengthAdjust="spacingAndGlyphs">21</text>
<text x="1166" y="449" textLength="14" lengthAdjust="spacingAndGlyphs">20</text>
<text x="1166" y="478" textLength="14" lengthAdjust="spacingAndGlyphs">19</text>
<text x="1166" y="507" textLength="14" lengthAdjust="spacingAndGlyphs">18</text>
<text x="1166" y="535" textLength="14" lengthAdjust="spacingAndGlyphs">17</text>
<text x="1166" y="564" textLength="14" lengthAdjust="spacingAndGlyphs">16</text>
<text x="1166" y="593" textLength="14" lengthAdjust="spacingAndGlyphs">15</text>
<text x="1166" y="621" textLength="14" lengthAdjust="spacingAndGlyphs">14</text>
<text x="1166" y="650" textLength="14" lengthAdjust="spacingAndGlyphs">13</text>
<text x="1166" y="679" textLength="14" lengthAdjust="spacingAndGlyphs">12</text>
<text x="1166" y="708" textLength="14" lengthAdjust="spacingAndGlyphs">11</text>
<text x="1166" y="736" textLength="14" lengthAdjust="spacingAndGlyphs">10</text>
<text x="1166" y="765">9</text>
<text x="1166" y="794">8</text>
<text x="1166" y="823">7</text>
<text x="1166" y="851">6</text>
<text x="1166" y="880">5</text>
</g>
</svg>
</body></html>
